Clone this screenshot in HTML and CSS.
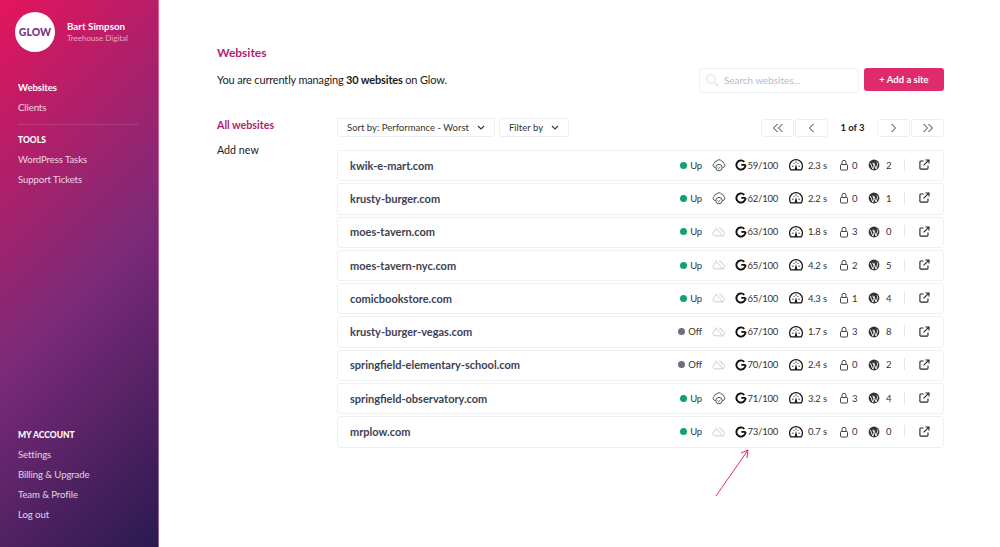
FILE: index.html
```html
<!DOCTYPE html>
<html lang="en">
<head>
    <meta charset="UTF-8">
    <meta name="viewport" content="width=device-width, initial-scale=1.0">
    <title>Websites - Glow</title>
    <link rel="stylesheet" href="styles.css">
</head>
<body>
    <svg class="defs" width="0" height="0">
        <symbol id="i-cloud-on" viewBox="0 0 14 14"><path d="M4 9.6H3.4A2.4 2.4 0 0 1 2.6 5 2.4 2.4 0 0 1 5 2.800 2.600 2.600 0 0 1 9.200 2.800 2.400 2.400 0 0 1 11.400 5 2.400 2.400 0 0 1 10.600 9.600H10" fill="none" stroke="#555" stroke-width="1"/><circle cx="7" cy="9.600" r="3.200" fill="#fff" stroke="#555" stroke-width="1"/><path d="M5.600 9.600l1 1 1.800-1.800" fill="none" stroke="#16a36f" stroke-width="1"/></symbol>
        <symbol id="i-cloud-off" viewBox="0 0 14 14"><path d="M4.200 10.800H3A2.300 2.300 0 0 1 2.600 6.300 3 3 0 0 1 5 3.600M7 3a3 3 0 0 1 3.200 3 2.400 2.400 0 0 1 1.300 4.400 1 1 0 0 1-.7.4H4.200M3.500 2.500l8 9" fill="none" stroke="#ccced3" stroke-width="1"/></symbol>
        <symbol id="i-g" viewBox="0 0 12 12"><path d="M10.600 5.900H6.300M10.600 5.900A4.600 4.600 0 1 1 9.300 2.800" fill="none" stroke="#111" stroke-width="1.900"/></symbol>
        <symbol id="i-gauge" viewBox="0 0 14 12"><path d="M1.800 10.800A6.400 6.400 0 1 1 12.200 10.800Z" fill="none" stroke="#111" stroke-width="1.200"/><path d="M3.200 7.200h1.400M9.400 7.200h1.400M4.400 3.900l1 1M9.600 3.900l-1 1M7 2.400v1.400" fill="none" stroke="#222" stroke-width="1"/><path d="M5.600 10.800 7 5l1.400 5.800Z" fill="#111"/></symbol>
        <symbol id="i-lock" viewBox="0 0 10 12"><rect x="1.500" y="5.500" width="7" height="5.500" rx=".8" fill="none" stroke="#444" stroke-width="1"/><path d="M3 5.500V3.300a2 2 0 0 1 4 0V5.500" fill="none" stroke="#444" stroke-width="1"/></symbol>
        <symbol id="i-wp" viewBox="0 0 12 12"><circle cx="6" cy="6" r="5.400" fill="#333"/><path d="M2.400 4 4.800 10.200 6 6.800 4.800 3.800M5.800 3.800 8 10l1.500-4.200c.3-1 0-1.800-.5-2.400" fill="none" stroke="#fff" stroke-width=".9"/></symbol>
        <symbol id="i-ext" viewBox="0 0 12 12"><path d="M9.800 7v3a1 1 0 0 1-1 1H2a1 1 0 0 1-1-1V3.200a1 1 0 0 1 1-1h3" fill="none" stroke="#222" stroke-width="1.200"/><path d="M5 7l5.500-5.500M7 1.100h3.900V5" fill="none" stroke="#222" stroke-width="1.200"/></symbol>
    </svg>
    <div class="app">
        <aside class="sidebar">
            <div class="sidebar-top">
                <div class="profile">
                    <div class="logo">
                        <span class="logo-text">GLOW</span>
                    </div>
                    <div class="profile-text">
                        <div class="profile-name">Bart Simpson</div>
                        <div class="profile-org">Treehouse Digital</div>
                    </div>
                </div>
                <nav class="side-nav">
                    <a class="active">Websites</a>
                    <a>Clients</a>
                    <div class="side-rule"></div>
                    <div class="side-title">TOOLS</div>
                    <a>WordPress Tasks</a>
                    <a>Support Tickets</a>
                </nav>
            </div>
            <nav class="side-nav">
                <div class="side-title">MY ACCOUNT</div>
                <a>Settings</a>
                <a>Billing &amp; Upgrade</a>
                <a>Team &amp; Profile</a>
                <a>Log out</a>
            </nav>
        </aside>
        <main class="main">
            <h1>Websites</h1>
            <div class="intro">
                <p>You are currently managing <b>30 websites</b> on Glow.</p>
                <div class="intro-actions">
                    <div class="search">
                        <svg width="14" height="14" viewBox="0 0 14 14"><circle cx="6" cy="6" r="4.300" fill="none" stroke="#dfe1e6" stroke-width="1.100"/><path d="M9.200 9.200 13 13" stroke="#dfe1e6" stroke-width="1.100"/></svg>
                        <span>Search websites...</span>
                    </div>
                    <button class="add-btn">+ Add a site</button>
                </div>
            </div>
            <div class="columns">
                <div class="sub-nav">
                    <a class="active">All websites</a>
                    <a>Add new</a>
                </div>
                <div class="content">
                    <div class="toolbar">
                        <button class="tool-btn sort">Sort by: Performance - Worst <svg width="8" height="6" viewBox="0 0 8 6"><path d="M1 1l3 3 3-3" fill="none" stroke="#333" stroke-width="1.100"/></svg></button>
                        <button class="tool-btn filter">Filter by <svg width="8" height="6" viewBox="0 0 8 6"><path d="M1 1l3 3 3-3" fill="none" stroke="#333" stroke-width="1.100"/></svg></button>
                        <div class="pager">
                            <button class="page-btn"><svg width="12" height="10" viewBox="0 0 12 10"><path d="M5.500 1 1.500 5l4 4M10.500 1l-4 4 4 4" fill="none" stroke="#333"/></svg></button>
                            <button class="page-btn"><svg width="7" height="10" viewBox="0 0 7 10"><path d="M5.500 1 1.500 5l4 4" fill="none" stroke="#333"/></svg></button>
                            <span class="page-count">1 of 3</span>
                            <button class="page-btn"><svg width="7" height="10" viewBox="0 0 7 10"><path d="M1.500 1l4 4-4 4" fill="none" stroke="#333"/></svg></button>
                            <button class="page-btn"><svg width="12" height="10" viewBox="0 0 12 10"><path d="M1.500 1l4 4-4 4M6.500 1l4 4-4 4" fill="none" stroke="#333"/></svg></button>
                        </div>
                    </div>
                    <div class="site-list" id="sites"></div>
                </div>
            </div>
            <svg class="arrow" width="36" height="50" viewBox="0 0 36 50"><path d="M1 48 33 2M26 5l7-3-1 8" fill="none" stroke="#e0306f" stroke-width="1"/></svg>
        </main>
    </div>
    <script>
        const sites = [
            ['kwik-e-mart.com', 'Up', true, 59, '2.3', 0, 2],
            ['krusty-burger.com', 'Up', true, 62, '2.2', 0, 1],
            ['moes-tavern.com', 'Up', false, 63, '1.8', 3, 0],
            ['moes-tavern-nyc.com', 'Up', false, 65, '4.2', 2, 5],
            ['comicbookstore.com', 'Up', false, 65, '4.3', 1, 4],
            ['krusty-burger-vegas.com', 'Off', false, 67, '1.7', 3, 8],
            ['springfield-elementary-school.com', 'Off', false, 70, '2.4', 0, 2],
            ['springfield-observatory.com', 'Up', true, 71, '3.2', 3, 4],
            ['mrplow.com', 'Up', false, 73, '0.7', 0, 0]
        ];

        function icon(name, w, h) {
            return `<svg width="${w}" height="${h}"><use href="#i-${name}"></use></svg>`;
        }

        const list = document.getElementById('sites');
        list.innerHTML = sites.map(s => `
            <div class="site-row">
                <div class="site-name">${s[0]}</div>
                <div class="cell status"><i class="dot ${s[1] === 'Up' ? 'up' : 'off'}"></i>${s[1]}</div>
                <div class="cell cloud">${icon(s[2] ? 'cloud-on' : 'cloud-off', 14, 14)}</div>
                <div class="cell score">${icon('g', 12, 12)}${s[3]}/100</div>
                <div class="cell speed">${icon('gauge', 14, 12)}${s[4]} s</div>
                <div class="cell locks">${icon('lock', 10, 12)}${s[5]}</div>
                <div class="cell wp">${icon('wp', 12, 12)}${s[6]}</div>
                <div class="cell ext">${icon('ext', 11, 11)}</div>
            </div>`).join('');
    </script>
</body>
</html>
```

FILE: styles.css
```css
* {
    box-sizing: border-box;
}
html, body {
    height: 100%;
}
body {
    margin: 0;
    font-family: Lato, "Open Sans", sans-serif;
    font-size: 11px;
    color: #1c1c24;
    background: #fff;
    overflow: hidden;
}
.defs {
    position: absolute;
}
.app {
    display: flex;
    height: 100%;
}
a {
    display: block;
}
button {
    font-family: inherit;
    cursor: pointer;
}

/* sidebar */
.sidebar {
    width: 159px;
    flex: none;
    display: flex;
    flex-direction: column;
    justify-content: space-between;
    padding: 12px 0 22px 18px;
    color: #fff;
    background: linear-gradient(135deg, #e4145c 0%, #7d2a78 52%, #2a1a50 100%);
    border-right: 1px solid rgba(255, 255, 255, 0.3);
}
.profile {
    display: flex;
    align-items: center;
    margin-left: -3px;
    gap: 12px;
}
.logo {
    width: 40px;
    height: 40px;
    border-radius: 50%;
    background: #fff;
    display: flex;
    align-items: center;
    justify-content: center;
}
.logo-text {
    font-size: 10.5px;
    font-weight: 900;
    color: #7a3488;
}
.profile-name {
    font-size: 9.8px;
    font-weight: 700;
    line-height: 12px;
}
.profile-org {
    font-size: 8px;
    line-height: 12px;
    opacity: 0.6;
}
.side-nav {
    font-size: 9.6px;
    letter-spacing: -0.1px;
    line-height: 20px;
}
.sidebar-top .side-nav {
    margin-top: 26px;
}
.side-nav a {
    opacity: 0.8;
}
.side-nav a.active {
    opacity: 1;
    font-weight: 700;
}
.side-rule {
    width: 120px;
    height: 1px;
    margin: 6px 0;
    background: rgba(255, 255, 255, 0.12);
}
.side-title {
    font-size: 8.5px;
    letter-spacing: 0;
    line-height: 19px;
    font-weight: 900;
}

/* main */
.main {
    flex: 1;
    position: relative;
    padding: 46px 56px 0 58px;
}
h1 {
    margin: 0;
    font-size: 12px;
    line-height: 14px;
    font-weight: 700;
    color: #b01f72;
}
.intro {
    display: flex;
    justify-content: space-between;
    align-items: center;
    margin-top: 8px;
}
.intro p {
    margin: 0 0 2px;
    font-size: 11px;
    letter-spacing: -0.17px;
}
.intro-actions {
    display: flex;
    gap: 5px;
}
.search {
    width: 160px;
    height: 25px;
    padding: 0 0 2px 5px;
    display: flex;
    align-items: center;
    gap: 5px;
    border: 1px solid #eef0f3;
    border-radius: 3px;
    color: #b6bccb;
    font-size: 9.9px;
}
.add-btn {
    width: 80px;
    height: 23px;
    border: none;
    border-radius: 3px;
    background: #df2b6b;
    color: #fff;
    font-size: 9.5px;
    font-weight: 700;
}
.columns {
    display: flex;
    margin-top: 19px;
}
.sub-nav {
    width: 120px;
    flex: none;
    font-size: 10.7px;
    line-height: 25px;
}
.sub-nav a.active {
    color: #b01f72;
    font-weight: 700;
}
.content {
    flex: 1;
    padding-top: 6px;
}
.toolbar {
    display: flex;
    align-items: center;
    gap: 4px;
    height: 19px;
}
.tool-btn {
    height: 19px;
    padding: 0;
    display: flex;
    align-items: center;
    justify-content: center;
    gap: 8px;
    background: #fff;
    border: 1px solid #eceef1;
    border-radius: 3px;
    color: #333;
    font-size: 9.5px;
}
.sort {
    width: 158px;
}
.filter {
    width: 70px;
}
.pager {
    margin-left: auto;
    display: flex;
    align-items: center;
    gap: 1px;
}
.page-btn {
    width: 33px;
    height: 18px;
    padding: 0;
    display: flex;
    align-items: center;
    justify-content: center;
    background: #fff;
    border: 1px solid #eceef1;
    border-radius: 3px;
}
.page-count {
    width: 47px;
    text-align: center;
    font-size: 9.5px;
    font-weight: 700;
}
.site-list {
    margin-top: 13px;
    display: flex;
    flex-direction: column;
    gap: 2px;
}
.site-row {
    height: 31.3px;
    display: flex;
    align-items: center;
    padding: 0 0 1px 12px;
    border: 1px solid #eef0f2;
    border-radius: 3px;
    font-size: 9.5px;
    letter-spacing: -0.2px;
    color: #333;
}
.site-name {
    flex: 1;
    font-size: 11px;
    letter-spacing: 0;
    font-weight: 700;
    color: #3c4252;
}
.cell {
    display: flex;
    align-items: center;
    flex: none;
}
.status {
    width: 50px;
    padding-right: 10px;
    justify-content: flex-end;
}
.dot {
    width: 7px;
    height: 7px;
    margin-right: 3.5px;
    border-radius: 50%;
}
.dot.up {
    background: #12a36d;
}
.dot.off {
    background: #6b7080;
}
.cloud {
    width: 22.5px;
}
.score {
    width: 54.5px;
    gap: 1px;
}
.speed {
    width: 49.5px;
    gap: 5px;
}
.locks {
    width: 29.5px;
    gap: 3.5px;
}
.wp {
    width: 36px;
    gap: 6px;
}
.ext {
    width: 39px;
    height: 12px;
    margin-bottom: 1px;
    padding-left: 1px;
    justify-content: center;
    border-left: 1px solid #e4e6e9;
}
.arrow {
    position: absolute;
    left: 556px;
    top: 448px;
}
```
